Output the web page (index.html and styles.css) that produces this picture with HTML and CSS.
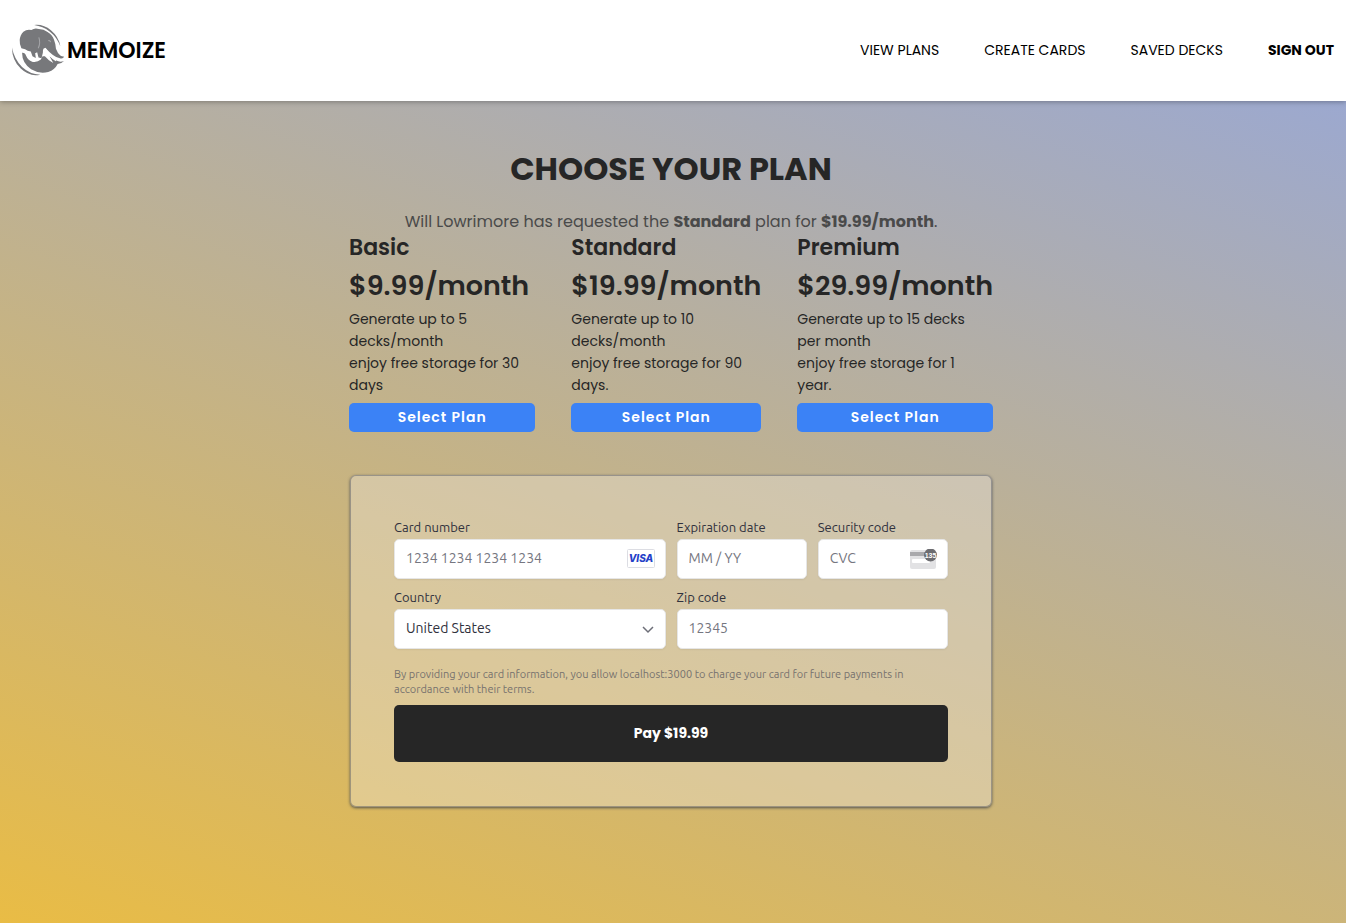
FILE: index.html
```html
<!DOCTYPE html>
<html lang="en">
<head>
<meta charset="utf-8">
<meta name="viewport" content="width=device-width, initial-scale=1">
<title>Memoize - Choose your plan</title>
<link rel="stylesheet" href="styles.css">
</head>
<body>
<header class="site-header">
  <a class="brand" href="#">
    <svg class="brand-logo" viewBox="18 12 158 158" aria-hidden="true">
      <g fill="#77787b">
        <path d="M84 15Q112 12 134 31Q157 50 162 78Q152 51 130 34Q110 19 84 15Z"/>
        <path d="M18 82Q24 116 48 140Q72 162 102 163Q70 170 44 145Q18 120 18 82Z"/>
        <path d="M41 60Q42 45 52 35Q62 27 76 30Q86 22 98 27Q113 27 124 36Q138 44 143 58Q148 70 149 86Q154 100 162 106Q168 110 173 109Q172 116 163 115Q150 113 139 104Q128 95 120 86L113 84Q108 90 110 98L106 114L97 112L93 96L87 99L89 113L79 108L74 94Q64 93 57 87L46 84Q40 72 41 60Z"/>
        <path d="M48 98Q57 97 60 107Q66 122 80 125Q94 127 104 118L109 108L116 108L128 120L141 128L130 108L146 118Q158 128 173 122Q166 130 154 131Q146 148 126 155Q100 162 75 147Q48 129 48 98Z"/>
      </g>
      <path d="M98 52Q104 70 96 84M126 62Q131 60 133 66" fill="none" stroke="#a5a6a9" stroke-width="3"/>
      <path d="M116 84Q126 106 150 121" fill="none" stroke="#fff" stroke-width="5"/>
    </svg>
    <span>MEMOIZE</span>
  </a>
  <nav class="site-nav">
    <a href="#">VIEW PLANS</a>
    <a href="#">CREATE CARDS</a>
    <a href="#">SAVED DECKS</a>
    <a class="sign-out" href="#">SIGN OUT</a>
  </nav>
</header>
<main class="content">
  <h1>CHOOSE YOUR PLAN</h1>
  <p class="request">Will Lowrimore has requested the <strong>Standard</strong> plan for <strong>$19.99/month</strong>.</p>
  <section class="plans">
    <article class="plan">
      <h2>Basic</h2>
      <p class="price">$9.99/month</p>
      <p class="details">Generate up to 5<br>decks/month<br>enjoy free storage for 30<br>days</p>
      <button type="button">Select Plan</button>
    </article>
    <article class="plan">
      <h2>Standard</h2>
      <p class="price">$19.99/month</p>
      <p class="details">Generate up to 10<br>decks/month<br>enjoy free storage for 90<br>days.</p>
      <button type="button">Select Plan</button>
    </article>
    <article class="plan">
      <h2>Premium</h2>
      <p class="price">$29.99/month</p>
      <p class="details">Generate up to 15 decks<br>per month<br>enjoy free storage for 1<br>year.</p>
      <button type="button">Select Plan</button>
    </article>
  </section>
  <form class="payment">
    <div class="fields">
      <div class="field wide">
        <label for="number">Card number</label>
        <div class="control">
          <input id="number" type="text" placeholder="1234 1234 1234 1234">
          <svg class="card-icon" viewBox="0 0 28 20" aria-hidden="true">
            <rect x=".5" y=".5" width="27" height="18" rx="1" fill="#fff" stroke="#dcdde3"/>
            <text x="14" y="13" text-anchor="middle" class="visa">VISA</text>
          </svg>
        </div>
      </div>
      <div class="field">
        <label for="expiry">Expiration date</label>
        <div class="control"><input id="expiry" type="text" placeholder="MM / YY"></div>
      </div>
      <div class="field">
        <label for="cvc">Security code</label>
        <div class="control">
          <input id="cvc" type="text" placeholder="CVC">
          <svg class="card-icon" viewBox="0 0 28 20" aria-hidden="true">
            <rect x="1" y="1" width="26" height="19" rx="2" fill="#e2e2e4"/>
            <path d="M1 3h26v4H1z" fill="#a9a9ac"/>
            <rect x="3" y="10" width="18" height="4" rx="1" fill="#fff"/>
            <circle cx="21.5" cy="6" r="6.5" fill="#6c6c70"/>
            <text x="21.5" y="8.5" text-anchor="middle" class="digits">135</text>
          </svg>
        </div>
      </div>
      <div class="field wide">
        <label for="country">Country</label>
        <div class="control">
          <select id="country"><option>United States</option></select>
          <svg class="chevron" viewBox="0 0 12 8" aria-hidden="true"><path d="M1 1l5 5 5-5" fill="none" stroke="#6d6e78" stroke-width="1.5"/></svg>
        </div>
      </div>
      <div class="field wide">
        <label for="zip">Zip code</label>
        <div class="control"><input id="zip" type="text" placeholder="12345"></div>
      </div>
    </div>
    <p class="terms">By providing your card information, you allow localhost:3000 to charge your card for future payments in accordance with their terms.</p>
    <button class="pay" type="submit">Pay $19.99</button>
  </form>
</main>
</body>
</html>
```

FILE: styles.css
```css
* { box-sizing: border-box; }

body {
  margin: 0;
  min-height: 100vh;
  font-family: Poppins, Inter, sans-serif;
  color: #262626;
  background: linear-gradient(20deg, #e9bc45, #96a7da);
}

h1, h2, p { margin: 0; }

button, input, select { font: inherit; }

.site-header {
  display: flex;
  align-items: center;
  justify-content: space-between;
  padding: 24px 12px;
  background: #fff;
  box-shadow: 0 1px 5px rgba(0, 0, 0, 0.3);
}

.site-header a { color: #000; text-decoration: none; }

.brand {
  display: flex;
  align-items: center;
  gap: 2px;
  font-size: 22px;
  line-height: 32px;
  font-weight: 600;
}

.brand-logo { width: 53px; height: 53px; }

.site-nav { display: flex; gap: 45px; font-size: 14px; }

.site-nav .sign-out { font-weight: 700; }

.content {
  width: 100%;
  max-width: 648px;
  margin: 0 auto;
  padding: 44px 4px 0 0;
}

h1 {
  font-size: 32px;
  line-height: 48px;
  font-weight: 700;
  text-align: center;
}

.request {
  margin-top: 17px;
  font-size: 16px;
  line-height: 24px;
  text-align: center;
  color: #4a4a4a;
}

.plans {
  display: grid;
  grid-template-columns: 187fr 190fr 195fr;
  gap: 36px;
}

.plan { display: flex; flex-direction: column; }

.plan h2 { font-size: 22px; line-height: 28px; font-weight: 600; }

.price {
  margin-top: 4px;
  font-size: 27px;
  line-height: 40px;
  font-weight: 600;
}

.details {
  margin-top: 2px;
  font-size: 14px;
  line-height: 22px;
  white-space: nowrap;
}

.plan button {
  height: 29px;
  margin-top: 7px;
  padding: 0;
  border: 0;
  border-radius: 5px;
  background: #3b82f6;
  color: #fff;
  font-size: 14px;
  font-weight: 600;
  letter-spacing: 1px;
}

.payment {
  margin: 43px 1px 0;
  padding: 43px 43px 44px;
  border: 1px solid rgba(80, 85, 100, 0.45);
  border-radius: 6px;
  background: rgba(240, 236, 228, 0.35);
  box-shadow: 0 1px 3px rgba(40, 50, 70, 0.75);
}

.fields {
  display: grid;
  grid-template-columns: repeat(4, 1fr);
  gap: 10px 11px;
  font-family: Ubuntu, "Noto Sans", sans-serif;
}

.wide { grid-column: span 2; }

.field label {
  display: block;
  font-size: 13px;
  line-height: 16px;
  margin-bottom: 4px;
  color: #30313d;
}

.control { position: relative; }

.control input, .control select {
  display: block;
  width: 100%;
  height: 40px;
  padding: 0 11px 2px;
  border: 1px solid #e6e6e6;
  border-radius: 5px;
  background: #fff;
  color: #30313d;
  font-size: 14px;
  appearance: none;
  box-shadow: 0 1px 2px rgba(0, 0, 0, 0.06);
}

.control input::placeholder { color: #757680; opacity: 1; }

.card-icon {
  position: absolute;
  top: 10px;
  right: 11px;
  width: 28px;
  height: 20px;
}

.visa {
  font: italic 800 10px Inter, sans-serif;
  fill: #2440c8;
}

.digits {
  font: 700 7px "Liberation Sans", sans-serif;
  fill: #fff;
}

.chevron {
  position: absolute;
  top: 17px;
  right: 12px;
  width: 12px;
  height: 8px;
}

.terms {
  margin-top: 18px;
  font-family: Ubuntu, "Noto Sans", sans-serif;
  font-size: 11px;
  line-height: 15px;
  color: #77726e;
}

.pay {
  display: block;
  width: 100%;
  height: 57px;
  margin-top: 8px;
  border: 0;
  border-radius: 5px;
  background: #262626;
  color: #fff;
  font-size: 14px;
  font-weight: 700;
}
```
